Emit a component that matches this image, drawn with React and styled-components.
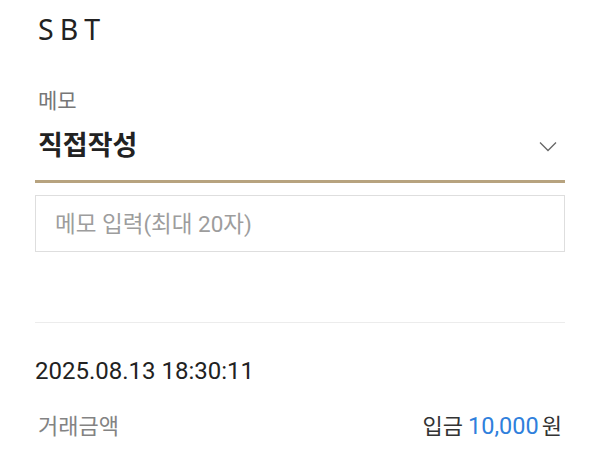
import React from "react";
import styled, { createGlobalStyle } from "styled-components";

const Global = createGlobalStyle`
  html, body { margin: 0; padding: 0; background: #fff; }
  body { font-family: Roboto, "Noto Sans CJK KR", sans-serif; color: #222; }
  * { box-sizing: border-box; }
`;

const Page = styled.div`
  width: 600px;
  height: 452px;
  overflow: hidden;
  padding: 9px 35px 0;
  display: flex;
  flex-direction: column;
`;

const Title = styled.h1`
  margin: 0;
  padding-left: 3px;
  font-family: "Noto Sans", "Open Sans", sans-serif;
  font-weight: 400;
  font-size: 28.5px;
  line-height: 40px;
  letter-spacing: 6px;
  color: #222;
`;

const Field = styled.div`
  margin-top: 38px;
  display: flex;
  flex-direction: column;
`;

const Label = styled.label`
  padding-left: 3px;
  font-size: 21px;
  line-height: 28px;
  color: #777;
`;

const Select = styled.div`
  margin-top: 13px;
  height: 55px;
  padding: 0 8px 0 3px;
  display: flex;
  align-items: flex-start;
  justify-content: space-between;
  border-bottom: 3px solid #b7a37f;
`;

const SelectValue = styled.span`
  font-size: 27px;
  font-weight: 700;
  line-height: 36px;
  color: #222;
`;

const Chevron = styled.svg`
  margin-top: 13px;
  width: 18px;
  height: 11px;
`;

const MemoInput = styled.input`
  margin-top: 12px;
  height: 57px;
  width: 100%;
  border: 1px solid #dedede;
  padding: 0 19px;
  font-family: Roboto, "Noto Sans CJK KR", sans-serif;
  font-size: 22.5px;
  color: #222;
  outline: none;
  &::placeholder { color: #9d9d9d; }
`;

const Divider = styled.hr`
  margin: 70px 0 0;
  border: 0;
  border-top: 1px solid #ececec;
`;

const DateText = styled.div`
  margin-top: 34px;
  font-size: 24px;
  line-height: 28px;
  color: #222;
`;

const InfoRow = styled.div`
  margin-top: 26px;
  display: flex;
  justify-content: space-between;
  align-items: baseline;
  padding: 0 3px;
`;

const InfoLabel = styled.span`
  font-size: 22px;
  line-height: 30px;
  color: #838383;
`;

const InfoValue = styled.span`
  font-size: 22px;
  line-height: 30px;
  color: #333;
`;

const Amount = styled.span`
  color: #2f80dc;
  font-size: 23.5px;
  margin: 0 3px 0 5px;
`;

export default function App() {
  return (
    <>
      <Global />
      <Page>
        <Title>SBT</Title>
        <Field>
          <Label>메모</Label>
          <Select>
            <SelectValue>직접작성</SelectValue>
            <Chevron viewBox="0 0 18 11" fill="none">
              <path d="M1 1.5 L9 9.5 L17 1.5" stroke="#666" strokeWidth="1.3" />
            </Chevron>
          </Select>
          <MemoInput placeholder="메모 입력(최대 20자)" />
        </Field>
        <Divider />
        <DateText>2025.08.13 18:30:11</DateText>
        <InfoRow>
          <InfoLabel>거래금액</InfoLabel>
          <InfoValue>
            입금<Amount>10,000</Amount>원
          </InfoValue>
        </InfoRow>
      </Page>
    </>
  );
}
